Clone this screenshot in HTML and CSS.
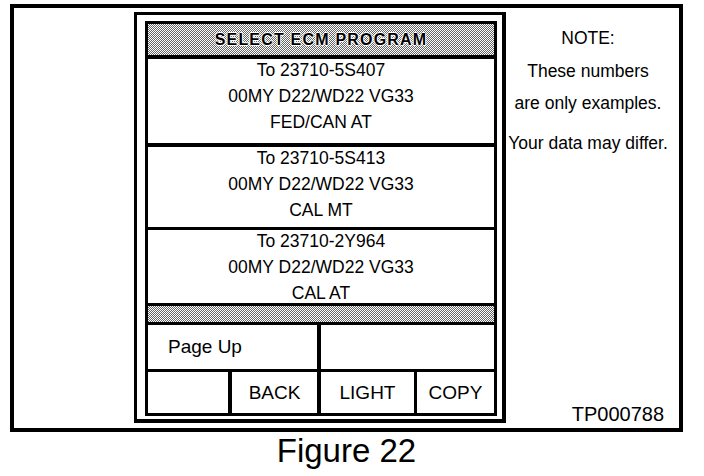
FILE: index.html
```html
<!DOCTYPE html>
<html lang="en">
<head>
    <meta charset="UTF-8">
    <title>Figure 22</title>
    <link rel="stylesheet" href="styles.css">
</head>
<body>
    <div class="figure">
        <div class="frame">
            <div class="device">
                <div class="panel">
                    <div class="title">SELECT ECM PROGRAM</div>
                    <div class="entry entry-1">
                        <div class="lines">
                            <p>To 23710-5S407</p>
                            <p>00MY D22/WD22 VG33</p>
                            <p>FED/CAN AT</p>
                        </div>
                    </div>
                    <div class="entry entry-2">
                        <div class="lines">
                            <p>To 23710-5S413</p>
                            <p>00MY D22/WD22 VG33</p>
                            <p>CAL MT</p>
                        </div>
                    </div>
                    <div class="entry entry-3">
                        <div class="lines">
                            <p>To 23710-2Y964</p>
                            <p>00MY D22/WD22 VG33</p>
                            <p>CAL AT</p>
                        </div>
                    </div>
                    <div class="scroll"></div>
                    <div class="keys-top">
                        <div class="key key-page">Page Up</div>
                        <div class="key key-blank"></div>
                    </div>
                    <div class="keys">
                        <div class="key key-1"></div>
                        <div class="key key-2">BACK</div>
                        <div class="key key-3">LIGHT</div>
                        <div class="key key-4">COPY</div>
                    </div>
                </div>
            </div>
            <div class="note">
                <p class="note-head">NOTE:</p>
                <p class="note-1">These numbers</p>
                <p class="note-2">are only examples.</p>
                <p class="note-3">Your data may differ.</p>
                <div class="code">TP000788</div>
            </div>
        </div>
        <div class="caption">Figure 22</div>
    </div>
</body>
</html>
```

FILE: styles.css
```css
*{
    padding: 0;
    margin: 0;
    box-sizing: border-box;
}
body{
    background: #fff;
    color: #000;
    font-family: "Liberation Sans", Arial, sans-serif;
}
.figure{
    width: 673px;
    margin: 4px 0 0 10px;
}
/* big outer frame */
.frame{
    height: 428px;
    border: 4px solid #000;
    display: flex;
}
.device{
    width: 372px;
    height: 411px;
    margin: 4px 0 0 120px;
    border-style: solid;
    border-color: #000;
    border-width: 3px 4px 4px 3px;
    padding: 6px 5px 3px 8px;
}
.panel{
    height: 395px;
    border: 3px solid #000;
    display: flex;
    flex-direction: column;
}
/* halftone grey of the printed screen */
.title,
.scroll{
    background-image: repeating-conic-gradient(#666 0 25%, #fff 0 50%);
    background-size: 2px 2px;
}
.title{
    height: 35px;
    border-bottom: 4px solid #000;
    text-align: center;
    font-size: 16px;
    font-weight: bold;
    letter-spacing: 1.2px;
    line-height: 31px;
    text-shadow: 1px 0 0 #fff, -1px 0 0 #fff, 0 1px 0 #fff, 0 -1px 0 #fff;
}
.entry{
    text-align: center;
    font-size: 17.5px;
    line-height: 26px;
    overflow: hidden;
}
.entry .lines{
    margin-top: -2px;
}
.entry-1{
    height: 88px;
    border-bottom: 4px solid #000;
}
.entry-2{
    height: 83px;
    border-bottom: 3px solid #000;
}
.entry-3{
    height: 76px;
    border-bottom: 3px solid #000;
}
.scroll{
    height: 19px;
    border-bottom: 3px solid #000;
}
.keys-top,
.keys{
    display: flex;
    font-size: 19px;
}
.keys-top{
    height: 47px;
    border-bottom: 3px solid #000;
}
.keys{
    height: 41px;
}
.key{
    display: flex;
    align-items: center;
    justify-content: center;
}
.key-page{
    width: 173px;
    border-right: 4px solid #000;
    justify-content: flex-start;
    padding-left: 20px;
}
.key-blank{
    flex: 1;
}
.key-1{
    width: 84px;
    border-right: 4px solid #000;
}
.key-2{
    width: 89px;
    border-right: 4px solid #000;
}
.key-3{
    width: 96px;
    border-right: 3px solid #000;
}
.key-4{
    flex: 1;
}
/* note column */
.note{
    flex: 1;
    display: flex;
    flex-direction: column;
    padding-right: 9px;
    font-size: 17.5px;
    line-height: 26px;
    text-align: center;
}
.note-head{
    margin-top: 17px;
}
.note-1{
    margin-top: 7px;
}
.note-2{
    margin-top: 6px;
}
.note-3{
    margin-top: 14px;
}
.code{
    margin-top: auto;
    margin-right: 6px;
    margin-bottom: 2px;
    text-align: right;
    font-size: 20px;
    line-height: 24px;
}
.caption{
    text-align: center;
    font-size: 33px;
    line-height: 38px;
}
```
